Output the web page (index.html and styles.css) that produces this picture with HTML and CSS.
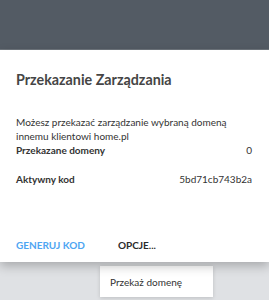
FILE: index.html
```html
<!DOCTYPE html>
<html>

<head>
	<meta charset="utf-8">
	<title>Przekazanie Zarządzania</title>
	<link rel="stylesheet" href="styles.css">
</head>

<body>
	<div class="topbar"></div>

	<div class="card">
		<h2>Przekazanie Zarządzania</h2>
		<p class="info">Możesz przekazać zarządzanie wybraną domeną innemu klientowi home.pl</p>
		<div class="row">
			<span class="label">Przekazane domeny</span>
			<span class="value">0</span>
		</div>
		<div class="row code">
			<span class="label">Aktywny kod</span>
			<span class="value">5bd71cb743b2a</span>
		</div>
		<div class="actions">
			<button class="primary">Generuj kod</button>
			<button class="options">Opcje...</button>
		</div>
	</div>

	<div class="under">
		<div class="menu">
			<div class="menu-item">Przekaż domenę</div>
		</div>
	</div>
</body>

</html>
```

FILE: styles.css
```css
body {
	margin: 0;
	font-family: Lato, "Open Sans", sans-serif;
	background-color: #dfe1e4;
	height: 300px;
	overflow: hidden;
}

.topbar {
	height: 49px;
	background-color: #535b64;
	border-bottom: 1px solid #6f767d;
}

.card {
	position: relative;
	z-index: 1;
	background-color: #fff;
	padding: 21px 17px 0 16px;
	height: 191px;
	box-shadow: 0 4px 10px rgba(0, 0, 0, 0.25);
}

h2 {
	margin: 0 0 28px;
	font-size: 14.3px;
	font-weight: 700;
	color: #454545;
}

.info {
	margin: 0;
	font-size: 10px;
	line-height: 13.5px;
	color: #333;
}

.row {
	display: flex;
	justify-content: space-between;
	font-size: 10px;
	line-height: 14px;
	color: #333;
}

.row .label {
	font-weight: 700;
}

.row.code {
	margin-top: 15px;
}

.actions {
	display: flex;
	gap: 33px;
	margin-top: 53px;
}

button {
	padding: 0;
	border: none;
	background: none;
	font-family: inherit;
	font-size: 10px;
	font-weight: 700;
	text-transform: uppercase;
	cursor: pointer;
}

button.primary {
	color: #4ea5f2;
}

button.options {
	color: #2b2b2b;
}

.under {
	padding: 4px 0 0 100px;
}

.menu {
	width: 113px;
	background-color: #fff;
	box-shadow: 0 1px 4px rgba(0, 0, 0, 0.15);
}

.menu-item {
	padding: 10px 10px 9px;
	font-size: 10px;
	color: #333;
}
```
